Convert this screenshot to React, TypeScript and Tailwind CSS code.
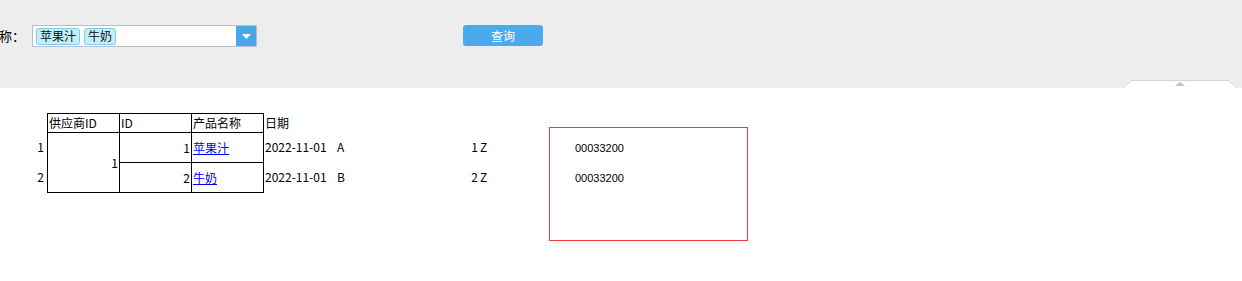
import React from "react";

const rows = [
  { no: 1, id: 1, name: "苹果汁", tag: "A", qty: 1 },
  { no: 2, id: 2, name: "牛奶", tag: "B", qty: 2 },
];

const cjk = { fontFamily: '"Noto Sans CJK SC", "Liberation Sans", sans-serif' };

function Tag({ label }: { label: string }) {
  return (
    <span className="flex h-[17px] items-center rounded-[3px] border border-[#7fcbea] bg-[#c2effa] px-[3px] text-[12px] leading-none text-[#111]">
      {label}
    </span>
  );
}

function CollapseHandle() {
  return (
    <svg width="116" height="9" viewBox="0 0 116 9" className="absolute bottom-0 right-[4px]">
      <path d="M0.5 9 L10 1.5 L106 1.5 L115.5 9" fill="#ffffff" stroke="#d6d6d6" />
      <path d="M53 7 L58 2.5 L63 7 Z" fill="#c4c4c4" />
    </svg>
  );
}

export default function App() {
  return (
    <div className="h-[281px] w-[1242px] overflow-hidden bg-white text-black" style={cjk}>
      {/* ── Query bar ── */}
      <div className="relative flex h-[88px] items-start bg-[#ededed] pt-[25px]">
        <span className="flex h-[22px] items-center text-[13px] -ml-[1px]">称：</span>
        <div className="ml-[7px] flex h-[22px] w-[225px] items-stretch border border-[#b8bccb] bg-white">
          <div className="flex flex-1 items-center gap-[4px] pl-[3px]">
            <Tag label="苹果汁" />
            <Tag label="牛奶" />
          </div>
          <div className="flex w-[20px] items-center justify-center bg-[#4aa6e8]">
            <svg width="9" height="5" viewBox="0 0 9 5">
              <path d="M0 0 L9 0 L4.5 5 Z" fill="#ffffff" />
            </svg>
          </div>
        </div>
        <button className="ml-[206px] flex h-[21px] w-[80px] items-center justify-center rounded-[3px] bg-[#4aaaec] text-[12px] text-white">
          查询
        </button>
        <CollapseHandle />
      </div>

      {/* ── Report ── */}
      <div className="flex items-start pt-[25px] text-[12px] leading-none">
        {/* row numbers */}
        <div className="flex w-[47px] flex-col items-end pr-[3px]">
          <div className="h-[19px]" />
          {rows.map((r) => (
            <div key={r.no} className="flex h-[30px] items-center">{r.no}</div>
          ))}
        </div>

        <table className="border-collapse">
          <thead>
            <tr className="h-[19px]">
              <th className="w-[72px] border border-black px-[1px] text-left font-normal">供应商ID</th>
              <th className="w-[72px] border border-black px-[1px] text-left font-normal">ID</th>
              <th className="w-[72px] border border-black px-[1px] text-left font-normal">产品名称</th>
            </tr>
          </thead>
          <tbody>
            {rows.map((r, i) => (
              <tr key={r.no} className="h-[30px]">
                {i === 0 && (
                  <td rowSpan={2} className="border border-black px-[1px] text-right align-middle">1</td>
                )}
                <td className="border border-black px-[1px] text-right">{r.id}</td>
                <td className="border border-black px-[1px] text-left">
                  <a href="#" className="text-[#0000ff] underline">{r.name}</a>
                </td>
              </tr>
            ))}
          </tbody>
        </table>

        <div className="flex w-[285px] flex-col pl-[1px]">
          <div className="flex h-[19px] items-center">日期</div>
          {rows.map((r) => (
            <div key={r.no} className="flex h-[30px] items-center">
              <span className="w-[72px]">2022-11-01</span>
              <span className="w-[134px]">{r.tag}</span>
              <span className="w-[7px] text-right">{r.qty}</span>
              <span className="pl-[2px]">Z</span>
            </div>
          ))}
        </div>

        <div
          className="mt-[14px] flex h-[114px] w-[199px] flex-col border border-[#ee3b3b] pl-[25px] pt-[5px] text-[11px]"
          style={{ fontFamily: '"Liberation Sans", Arial, sans-serif' }}
        >
          <div className="flex h-[30px] items-center">00033200</div>
          <div className="flex h-[30px] items-center">00033200</div>
        </div>
      </div>
    </div>
  );
}
